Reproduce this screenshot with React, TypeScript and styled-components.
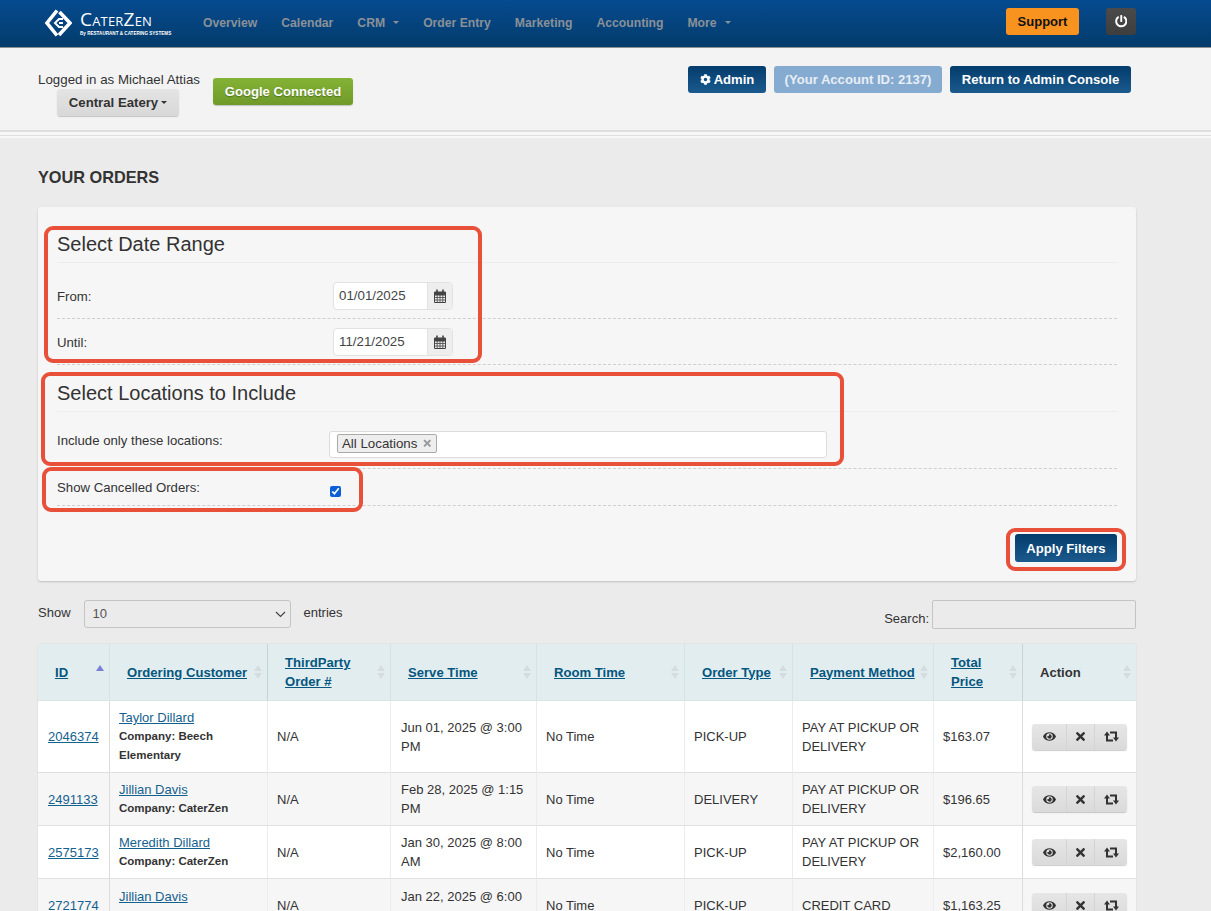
import React from "react";
import styled, { createGlobalStyle } from "styled-components";
import { FaCog, FaEye, FaTimes, FaPowerOff } from "react-icons/fa";

const Global = createGlobalStyle`
  html, body { margin: 0; padding: 0; height: 100%; overflow: hidden; }
  body { background: #ebebeb; font-family: "Liberation Sans", Arial, sans-serif; font-size: 13px; color: #333; }
  * { box-sizing: border-box; }
`;

const Page = styled.div`
  position: relative;
  width: 1211px;
  height: 911px;
  overflow: hidden;
`;

const Header = styled.header`
  height: 48px;
  background: linear-gradient(#064a90, #033c6b);
  border-bottom: 1px solid #8d8f90;
  display: flex;
  align-items: center;
  padding: 0 75px 0 44px;
`;
const Logo = styled.div`
  display: flex;
  align-items: center;
  gap: 8px;
  width: 159px;
  flex: none;
  color: #fff;
  margin-top: -1px;
`;
const LogoWords = styled.div`
  display: flex;
  flex-direction: column;
  width: 92px;
  height: 28px;
  justify-content: space-between;
`;
const LogoName = styled.span`
  font-family: "Open Sans", sans-serif;
  font-size: 19px;
  line-height: 20px;
  font-weight: 400;
  font-variant: small-caps;
  letter-spacing: 0.2px;
  white-space: nowrap;
  height: 20px;
  overflow: visible;
`;
const LogoSub = styled.span`
  font-size: 4.6px;
  line-height: 6px;
  font-weight: 700;
  white-space: nowrap;
`;
const Nav = styled.nav`
  display: flex;
  align-items: center;
  gap: 24px;
  flex: 1;
`;
const NavItem = styled.span`
  color: #8a9198;
  font-weight: 700;
  font-size: 12.2px;
  display: inline-flex;
  align-items: center;
  gap: 6px;
  margin-top: -2px;
`;
const Caret = styled.i<{ $color?: string }>`
  display: inline-block;
  width: 0;
  height: 0;
  border-left: 3.5px solid transparent;
  border-right: 3.5px solid transparent;
  border-top: 3.5px solid ${(p) => p.$color ?? "#8a9198"};
`;
const NavCaret = styled(Caret)`
  margin-left: 2px;
`;
const Support = styled.button`
  width: 73px;
  height: 27px;
  border: 0;
  border-radius: 3px;
  background: #f7931e;
  color: #111;
  font: 700 13px "Liberation Sans", sans-serif;
  padding: 0;
  margin-top: -4px;
  margin-right: 27px;
`;
const PowerBtn = styled.button`
  width: 30px;
  height: 27px;
  border: 0;
  border-radius: 3px;
  background: linear-gradient(#4a4a4a, #3e3e3e);
  color: #fff;
  padding: 0;
  margin-top: -4px;
  display: flex;
  align-items: center;
  justify-content: center;
  font-size: 12.5px;
`;

const SubHeader = styled.section`
  height: 82px;
  background: #f3f3f3;
  display: flex;
  justify-content: space-between;
  padding: 17px 80px 0 38px;
`;
const Account = styled.div`
  display: flex;
  align-items: flex-start;
  gap: 13px;
`;
const Logged = styled.div`
  display: flex;
  flex-direction: column;
  align-items: center;
  width: 162px;
  font-size: 13.3px;
  line-height: 25px;
  padding-top: 2px;
`;
const Chooser = styled.div`
  width: 122px;
  height: 27px;
  margin: -3px 2px 0 0;
  background: linear-gradient(#e4e4e4, #d8d8d8);
  border-radius: 3px;
  box-shadow: 0 1px 1px rgba(0, 0, 0, 0.2);
  font-weight: 700;
  font-size: 13.2px;
  line-height: 25px;
  color: #333;
  display: flex;
  align-items: center;
  justify-content: center;
  gap: 3px;
`;
const GoogleBtn = styled.button`
  width: 140px;
  height: 27px;
  margin-top: 13px;
  border: 0;
  border-radius: 3px;
  background: linear-gradient(#84b234, #6f9a2a);
  color: #fff;
  font: 700 13.1px "Liberation Sans", sans-serif;
  text-shadow: 0 1px 1px rgba(0, 0, 0, 0.3);
  box-shadow: 0 1px 1px rgba(0, 0, 0, 0.2);
  padding: 0;
`;
const AdminGroup = styled.div`
  display: flex;
  gap: 8px;
  align-items: flex-start;
  margin-top: 1px;
`;
const NavyBtn = styled.button<{ $w?: number; $h?: number; $muted?: boolean }>`
  width: ${(p) => p.$w ?? 78}px;
  height: ${(p) => p.$h ?? 27}px;
  border: 0;
  border-radius: 3px;
  background: ${(p) => (p.$muted ? "#86abd0" : "linear-gradient(#033c6b, #1b5a8e)")};
  color: ${(p) => (p.$muted ? "#e8eef5" : "#fff")};
  font: 700 13.1px "Liberation Sans", sans-serif;
  padding: 0;
  display: inline-flex;
  align-items: center;
  justify-content: center;
  gap: 3px;
`;
const Rules = styled.div`
  height: 8px;
  background: #f7f7f7;
  border-top: 2px solid #dedede;
  border-bottom: 1px solid #f7f7f7;
  display: flex;
  align-items: center;
  padding-top: 1px;
  &::after {
    content: "";
    display: block;
    width: 100%;
    height: 1px;
    background: #dedede;
  }
`;
const Main = styled.main`
  padding: 0 75px 0 38px;
`;
const Title = styled.h1`
  margin: 0;
  padding-top: 30px;
  height: 69px;
  font-size: 16.3px;
  line-height: 18px;
  font-weight: 700;
  color: #333;
`;
const Panel = styled.div`
  height: 374px;
  background: #f6f6f6;
  border-radius: 3px;
  box-shadow: 0 1px 2px rgba(0, 0, 0, 0.18);
  padding: 0 19px;
`;
const PanelTitle = styled.h2<{ $h: number }>`
  margin: 0;
  height: ${(p) => p.$h}px;
  display: flex;
  align-items: flex-end;
  padding-bottom: 6px;
  font-size: 20px;
  line-height: 24px;
  font-weight: 400;
  color: #333;
  border-bottom: 1px solid #ececec;
`;
const FormRow = styled.div<{ $top: number; $h: number }>`
  height: ${(p) => p.$h}px;
  padding-top: ${(p) => p.$top}px;
  display: flex;
  align-items: flex-start;
  border-bottom: 1px dashed #cfcfcf;
`;
const FormLabel = styled.label<{ $top: number }>`
  width: 276px;
  flex: none;
  font-size: 13.2px;
  line-height: 16px;
  padding-top: ${(p) => p.$top}px;
  color: #333;
`;
const DateGroup = styled.div`
  width: 120px;
  height: 28px;
  display: flex;
  border: 1px solid #e2e2e2;
  border-radius: 4px;
  background: #fff;
`;
const DateText = styled.span`
  flex: 1;
  font-size: 13.3px;
  line-height: 25px;
  padding-left: 5px;
  color: #444;
`;
const DateAddon = styled.span`
  width: 25px;
  background: #eeeeee;
  border-left: 1px solid #e2e2e2;
  display: flex;
  align-items: center;
  justify-content: center;
  border-radius: 0 4px 4px 0;
`;
const TagInput = styled.div`
  width: 498px;
  height: 27px;
  margin-left: -4px;
  border: 1px solid #dcdcdc;
  border-radius: 3px;
  background: #fff;
  padding: 2px 7px;
`;
const Tag = styled.span`
  display: inline-flex;
  align-items: center;
  justify-content: space-between;
  width: 100px;
  height: 19px;
  padding: 0 4px;
  background: #eeeeee;
  border: 1px solid #aaa;
  border-radius: 2px;
  color: #333;
  font-size: 13.3px;
  line-height: 17px;
`;
const TagClose = styled.span`
  color: #999;
  display: inline-flex;
  font-size: 10.5px;
`;
const Check = styled.input`
  width: 11px;
  height: 11px;
  margin: 7px 0 0 -3px;
  accent-color: #0b5ed7;
`;
const PanelFoot = styled.div`
  display: flex;
  justify-content: flex-end;
  padding: 28px 0 0;
`;
const Controls = styled.div`
  display: flex;
  justify-content: space-between;
  height: 63px;
  padding-top: 19px;
`;
const Entries = styled.div`
  display: flex;
  align-items: flex-start;
  gap: 13px;
  line-height: 26px;
`;
const SelectBox = styled.div`
  width: 207px;
  height: 28px;
  border: 1px solid #c4c4c4;
  border-radius: 3px;
  padding: 0 4px 0 8px;
  display: flex;
  align-items: center;
  justify-content: space-between;
  color: #555;
  background: #ebebeb;
`;
const SearchWrap = styled.div`
  display: flex;
  gap: 3px;
  align-items: flex-start;
`;
const SearchLabel = styled.label`
  line-height: 18px;
  padding-top: 10px;
`;
const SearchInput = styled.div`
  width: 204px;
  height: 29px;
  border: 1px solid #c4c4c4;
  border-radius: 2px;
`;
const Table = styled.table`
  width: 1098px;
  table-layout: fixed;
  border-collapse: separate;
  border-spacing: 0;
  background: #fff;
  border-radius: 3px 3px 0 0;
  box-shadow: 0 0 1px rgba(0, 0, 0, 0.3);
`;
const Th = styled.th<{ $strong?: boolean }>`
  position: relative;
  height: 57px;
  padding: 0 9px 0 17px;
  background: #e2edf0;
  text-align: left;
  font-size: 13.1px;
  line-height: 19px;
  font-weight: 700;
  border-right: 1px solid ${(p) => (p.$strong ? "#c9d2d4" : "#d8e2e5")};
  border-bottom: 1px solid #dce4e6;
  color: #333;
  &:last-child { border-right: 0; }
`;
const HeadLink = styled.span`
  color: #05577f;
  text-decoration: underline;
`;
const SortIcon = styled.span`
  position: absolute;
  right: 5px;
  top: 50%;
  margin-top: -7px;
  display: flex;
  flex-direction: column;
  gap: 2px;
`;
const Up = styled.i<{ $c: string }>`
  width: 0;
  height: 0;
  border-left: 4px solid transparent;
  border-right: 4px solid transparent;
  border-bottom: 6px solid ${(p) => p.$c};
`;
const Down = styled.i`
  width: 0;
  height: 0;
  border-left: 4px solid transparent;
  border-right: 4px solid transparent;
  border-top: 6px solid #d5dcdf;
`;
const Tr = styled.tr<{ $h: number; $alt?: boolean }>`
  height: ${(p) => p.$h}px;
  background: ${(p) => (p.$alt ? "#f6f6f6" : "#fff")};
`;
const Td = styled.td<{ $strong?: boolean }>`
  padding: 0 9px;
  font-size: 13px;
  line-height: 19px;
  color: #333;
  vertical-align: middle;
  border-right: 1px solid ${(p) => (p.$strong ? "#dcdcdc" : "#ececec")};
  border-bottom: 1px solid #e0e0e0;
  &:first-child, &:nth-child(4) { padding-left: 10px; }
  &:last-child { border-right: 0; }
`;
const CellLink = styled.a`
  color: #13618f;
  text-decoration: underline;
`;
const Company = styled.div`
  font-size: 11.5px;
  font-weight: 700;
  line-height: 19px;
  color: #333;
`;
const ActionGroup = styled.div`
  display: flex;
  width: 95px;
  height: 26px;
  border-radius: 3px;
  overflow: hidden;
  background: linear-gradient(#e6e6e6, #dadada);
  box-shadow: 0 1px 1px rgba(0, 0, 0, 0.2);
`;
const ActionBtn = styled.span<{ $w: number }>`
  width: ${(p) => p.$w}px;
  flex: none;
  display: flex;
  align-items: center;
  justify-content: center;
  font-size: 13px;
  color: #333;
  & + & { border-left: 1px solid #d4d4d4; }
`;
const Callout = styled.div<{ $x: number; $y: number; $w: number; $h: number }>`
  position: absolute;
  left: ${(p) => p.$x}px;
  top: ${(p) => p.$y}px;
  width: ${(p) => p.$w}px;
  height: ${(p) => p.$h}px;
  border: 4px solid #e8503a;
  border-radius: 9px;
  pointer-events: none;
`;

const LogoMark = () => (
  <svg width="28" height="28" viewBox="0 0 28 28" fill="none" stroke="#fff">
    <path d="M13 1.500 3 14l10 12.500" strokeWidth="3.6" />
    <path d="M15.500 3 26 14 15 26" strokeWidth="3.6" />
    <path d="M19 10h-4l-4 4 4 4h4" strokeWidth="2" />
    <path d="M15 14h4" strokeWidth="2" />
  </svg>
);
const Calendar = () => (
  <svg width="12" height="14" viewBox="0 0 12 14" fill="none" stroke="#444">
    <path d="M.5 3.500h11v10H.5z" />
    <path d="M.5 3h11v3H.5z" fill="#444" />
    <path d="M3 .5v3M9 .5v3" strokeWidth="1.6" />
    <path d="M.5 8.500h11M.5 11h11M3.200 6v7.500M6 6v7.500M8.800 6v7.500" strokeWidth=".8" />
  </svg>
);
const Chevron = () => (
  <svg width="11" height="7" viewBox="0 0 11 7" fill="none" stroke="#444" strokeWidth="1.2">
    <path d="M1 1l4.500 4.500L10 1" />
  </svg>
);
const Retweet = () => (
  <svg width="15" height="11" viewBox="0 0 15 11">
    <g fill="none" stroke="#333" strokeWidth="2">
      <path d="M3 4v5.500h6" />
      <path d="M6 1.500h6V7" />
    </g>
    <path d="M0 4.500 3 .5l3 4zM9 6.500l3 4 3-4z" fill="#333" />
  </svg>
);

const columns = [
  { w: 72, lines: ["ID"], active: true },
  { w: 158, lines: ["Ordering Customer"], strong: true },
  { w: 123, lines: ["ThirdParty", "Order #"] },
  { w: 146, lines: ["Serve Time"] },
  { w: 148, lines: ["Room Time"] },
  { w: 108, lines: ["Order Type"] },
  { w: 141, lines: ["Payment Method"] },
  { w: 89, lines: ["Total", "Price"], strong: true },
  { w: 113, lines: ["Action"], plain: true },
];

const rows = [
  { id: "2046374", name: "Taylor Dillard", co: ["Company: Beech", "Elementary"], serve: "Jun 01, 2025 @ 3:00 PM", type: "PICK-UP", pay: "PAY AT PICKUP OR DELIVERY", price: "$163.07", h: 72 },
  { id: "2491133", name: "Jillian Davis", co: ["Company: CaterZen"], serve: "Feb 28, 2025 @ 1:15 PM", type: "DELIVERY", pay: "PAY AT PICKUP OR DELIVERY", price: "$196.65", h: 53 },
  { id: "2575173", name: "Meredith Dillard", co: ["Company: CaterZen"], serve: "Jan 30, 2025 @ 8:00 AM", type: "PICK-UP", pay: "PAY AT PICKUP OR DELIVERY", price: "$2,160.00", h: 53 },
  { id: "2721774", name: "Jillian Davis", co: ["Company: CaterZen"], serve: "Jan 22, 2025 @ 6:00 PM", type: "PICK-UP", pay: "CREDIT CARD", price: "$1,163.25", h: 54 },
];

export default function App() {
  return (
    <Page>
      <Global />
      <Header>
        <Logo>
          <LogoMark />
          <LogoWords>
            <LogoName>CaterZen</LogoName>
            <LogoSub>By RESTAURANT &amp; CATERING SYSTEMS</LogoSub>
          </LogoWords>
        </Logo>
        <Nav>
          <NavItem>Overview</NavItem>
          <NavItem>Calendar</NavItem>
          <NavItem>CRM <NavCaret /></NavItem>
          <NavItem>Order Entry</NavItem>
          <NavItem>Marketing</NavItem>
          <NavItem>Accounting</NavItem>
          <NavItem>More <NavCaret /></NavItem>
        </Nav>
        <Support>Support</Support>
        <PowerBtn><FaPowerOff /></PowerBtn>
      </Header>
      <SubHeader>
        <Account>
          <Logged>
            Logged in as Michael Attias
            <Chooser>Central Eatery <Caret $color="#333" /></Chooser>
          </Logged>
          <GoogleBtn>Google Connected</GoogleBtn>
        </Account>
        <AdminGroup>
          <NavyBtn $w={78}><FaCog size={11} /> Admin</NavyBtn>
          <NavyBtn $w={168} $muted>(Your Account ID: 2137)</NavyBtn>
          <NavyBtn $w={181}>Return to Admin Console</NavyBtn>
        </AdminGroup>
      </SubHeader>
      <Rules />
      <Main>
        <Title>YOUR ORDERS</Title>
        <Panel>
          <PanelTitle $h={56}>Select Date Range</PanelTitle>
          <FormRow $top={19} $h={56}>
            <FormLabel $top={7}>From:</FormLabel>
            <DateGroup><DateText>01/01/2025</DateText><DateAddon><Calendar /></DateAddon></DateGroup>
          </FormRow>
          <FormRow $top={9} $h={46}>
            <FormLabel $top={7}>Until:</FormLabel>
            <DateGroup><DateText>11/21/2025</DateText><DateAddon><Calendar /></DateAddon></DateGroup>
          </FormRow>
          <PanelTitle $h={47}>Select Locations to Include</PanelTitle>
          <FormRow $top={19} $h={57}>
            <FormLabel $top={2}>Include only these locations:</FormLabel>
            <TagInput><Tag>All Locations <TagClose><FaTimes /></TagClose></Tag></TagInput>
          </FormRow>
          <FormRow $top={10} $h={37}>
            <FormLabel $top={1}>Show Cancelled Orders:</FormLabel>
            <Check type="checkbox" defaultChecked />
          </FormRow>
          <PanelFoot><NavyBtn $w={102} $h={28}>Apply Filters</NavyBtn></PanelFoot>
        </Panel>
        <Controls>
          <Entries>
            Show
            <SelectBox>10 <Chevron /></SelectBox>
            entries
          </Entries>
          <SearchWrap>
            <SearchLabel>Search:</SearchLabel>
            <SearchInput />
          </SearchWrap>
        </Controls>
        <Table>
          <colgroup>
            {columns.map((c, i) => <col key={i} width={c.w} />)}
          </colgroup>
          <thead>
            <tr>
              {columns.map((c, i) => (
                <Th key={i} $strong={c.strong}>
                  {c.plain ? c.lines[0] : (
                    <HeadLink>
                      {c.lines.map((l, j) => (<React.Fragment key={j}>{j > 0 && <br />}{l}</React.Fragment>))}
                    </HeadLink>
                  )}
                  <SortIcon>
                    <Up $c={c.active ? "#7d7fd6" : "#d5dcdf"} />
                    {!c.active && <Down />}
                  </SortIcon>
                </Th>
              ))}
            </tr>
          </thead>
          <tbody>
            {rows.map((r, i) => (
              <Tr key={r.id} $h={r.h} $alt={i % 2 === 1}>
                <Td $strong><CellLink>{r.id}</CellLink></Td>
                <Td>
                  <CellLink>{r.name}</CellLink>
                  {r.co.map((c) => <Company key={c}>{c}</Company>)}
                </Td>
                <Td>N/A</Td>
                <Td>{r.serve}</Td>
                <Td>No Time</Td>
                <Td>{r.type}</Td>
                <Td>{r.pay}</Td>
                <Td $strong>{r.price}</Td>
                <Td>
                  <ActionGroup>
                    <ActionBtn $w={34}><FaEye /></ActionBtn>
                    <ActionBtn $w={28}><FaTimes /></ActionBtn>
                    <ActionBtn $w={33}><Retweet /></ActionBtn>
                  </ActionGroup>
                </Td>
              </Tr>
            ))}
          </tbody>
        </Table>
      </Main>
      <Callout $x={44} $y={226} $w={438} $h={137} />
      <Callout $x={41} $y={372} $w={803} $h={94} />
      <Callout $x={42} $y={467} $w={321} $h={45} />
      <Callout $x={1006} $y={528} $w={120} $h={43} />
    </Page>
  );
}
